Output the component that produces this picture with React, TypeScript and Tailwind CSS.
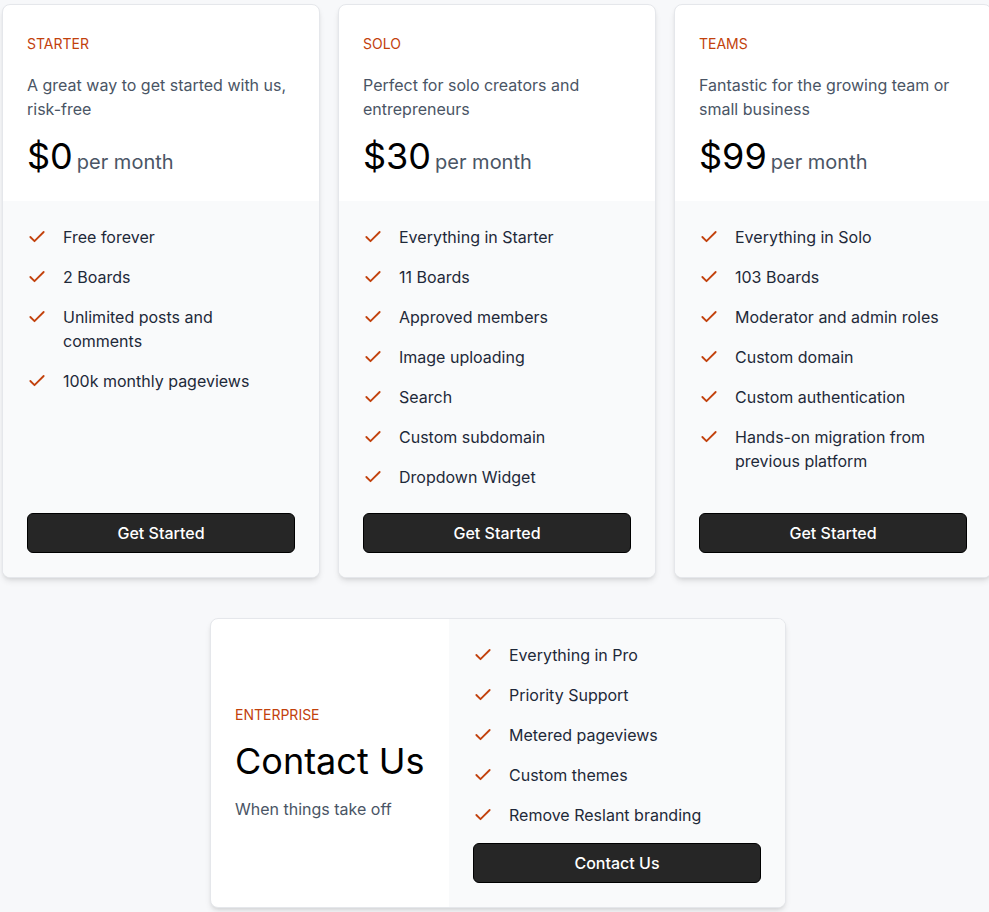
import React from "react";
import { Check } from "lucide-react";

type Plan = {
  name: string;
  blurb: string;
  price: string;
  features: string[];
};

const plans: Plan[] = [
  {
    name: "STARTER",
    blurb: "A great way to get started with us, risk-free",
    price: "$0",
    features: ["Free forever", "2 Boards", "Unlimited posts and comments", "100k monthly pageviews"],
  },
  {
    name: "SOLO",
    blurb: "Perfect for solo creators and entrepreneurs",
    price: "$30",
    features: [
      "Everything in Starter",
      "11 Boards",
      "Approved members",
      "Image uploading",
      "Search",
      "Custom subdomain",
      "Dropdown Widget",
    ],
  },
  {
    name: "TEAMS",
    blurb: "Fantastic for the growing team or small business",
    price: "$99",
    features: [
      "Everything in Solo",
      "103 Boards",
      "Moderator and admin roles",
      "Custom domain",
      "Custom authentication",
      "Hands-on migration from previous platform",
    ],
  },
];

const enterpriseFeatures = [
  "Everything in Pro",
  "Priority Support",
  "Metered pageviews",
  "Custom themes",
  "Remove Reslant branding",
];

const Feature = ({ text }: { text: string }) => (
  <li className="flex items-start gap-4">
    <Check className="w-5 h-5 mt-0.5 shrink-0 text-[#c2410c]" strokeWidth={2.2} />
    <span className="text-base leading-6 text-gray-800">{text}</span>
  </li>
);

const PlanCard = ({ plan }: { plan: Plan }) => (
  <div className="w-[318px] shrink-0 flex flex-col bg-white border border-gray-200 rounded-lg shadow-md overflow-hidden">
    <div className="px-6 pt-[29px] pb-[25px]">
      <p className="text-sm leading-5 text-[#c2410c]">{plan.name}</p>
      <p className="mt-[19px] text-base leading-6 text-gray-600">{plan.blurb}</p>
      <p className="mt-[15px] flex items-baseline">
        <span className="text-4xl leading-10 text-black">{plan.price}</span>
        <span className="ml-1 text-xl text-gray-600">per month</span>
      </p>
    </div>
    <div className="flex-1 flex flex-col bg-[#f9fafb] px-6 pt-6 pb-6">
      <ul className="flex-1 space-y-4">
        {plan.features.map((f) => (
          <Feature key={f} text={f} />
        ))}
      </ul>
      <button className="mt-6 h-10 w-full rounded-md bg-[#262626] border border-black text-base font-medium text-white">
        Get Started
      </button>
    </div>
  </div>
);

export default function App() {
  return (
    <div
      className="w-screen min-h-screen overflow-hidden bg-[#f7f8fa] pt-1 pb-8"
      style={{ fontFamily: "Inter, 'Noto Sans', sans-serif" }}
    >
      <div className="w-[990px] ml-[2px]">
        <div className="flex gap-[18px] items-stretch">
          {plans.map((p) => (
            <PlanCard key={p.name} plan={p} />
          ))}
        </div>

        <div className="mt-[40px] pl-[2px] flex justify-center">
          <div className="flex bg-white border border-gray-200 rounded-lg shadow-md overflow-hidden">
            <div className="w-[238px] flex flex-col justify-center px-6">
              <p className="text-sm leading-5 text-[#c2410c]">ENTERPRISE</p>
              <p className="mt-4 text-4xl leading-10 text-black">Contact Us</p>
              <p className="mt-4 text-base leading-6 text-gray-600">When things take off</p>
            </div>
            <div className="w-[336px] bg-[#f9fafb] p-6 space-y-4">
              <ul className="space-y-4">
                {enterpriseFeatures.map((f) => (
                  <Feature key={f} text={f} />
                ))}
              </ul>
              <button className="h-10 w-full rounded-md bg-[#262626] border border-black text-base font-medium text-white">
                Contact Us
              </button>
            </div>
          </div>
        </div>
      </div>
    </div>
  );
}
